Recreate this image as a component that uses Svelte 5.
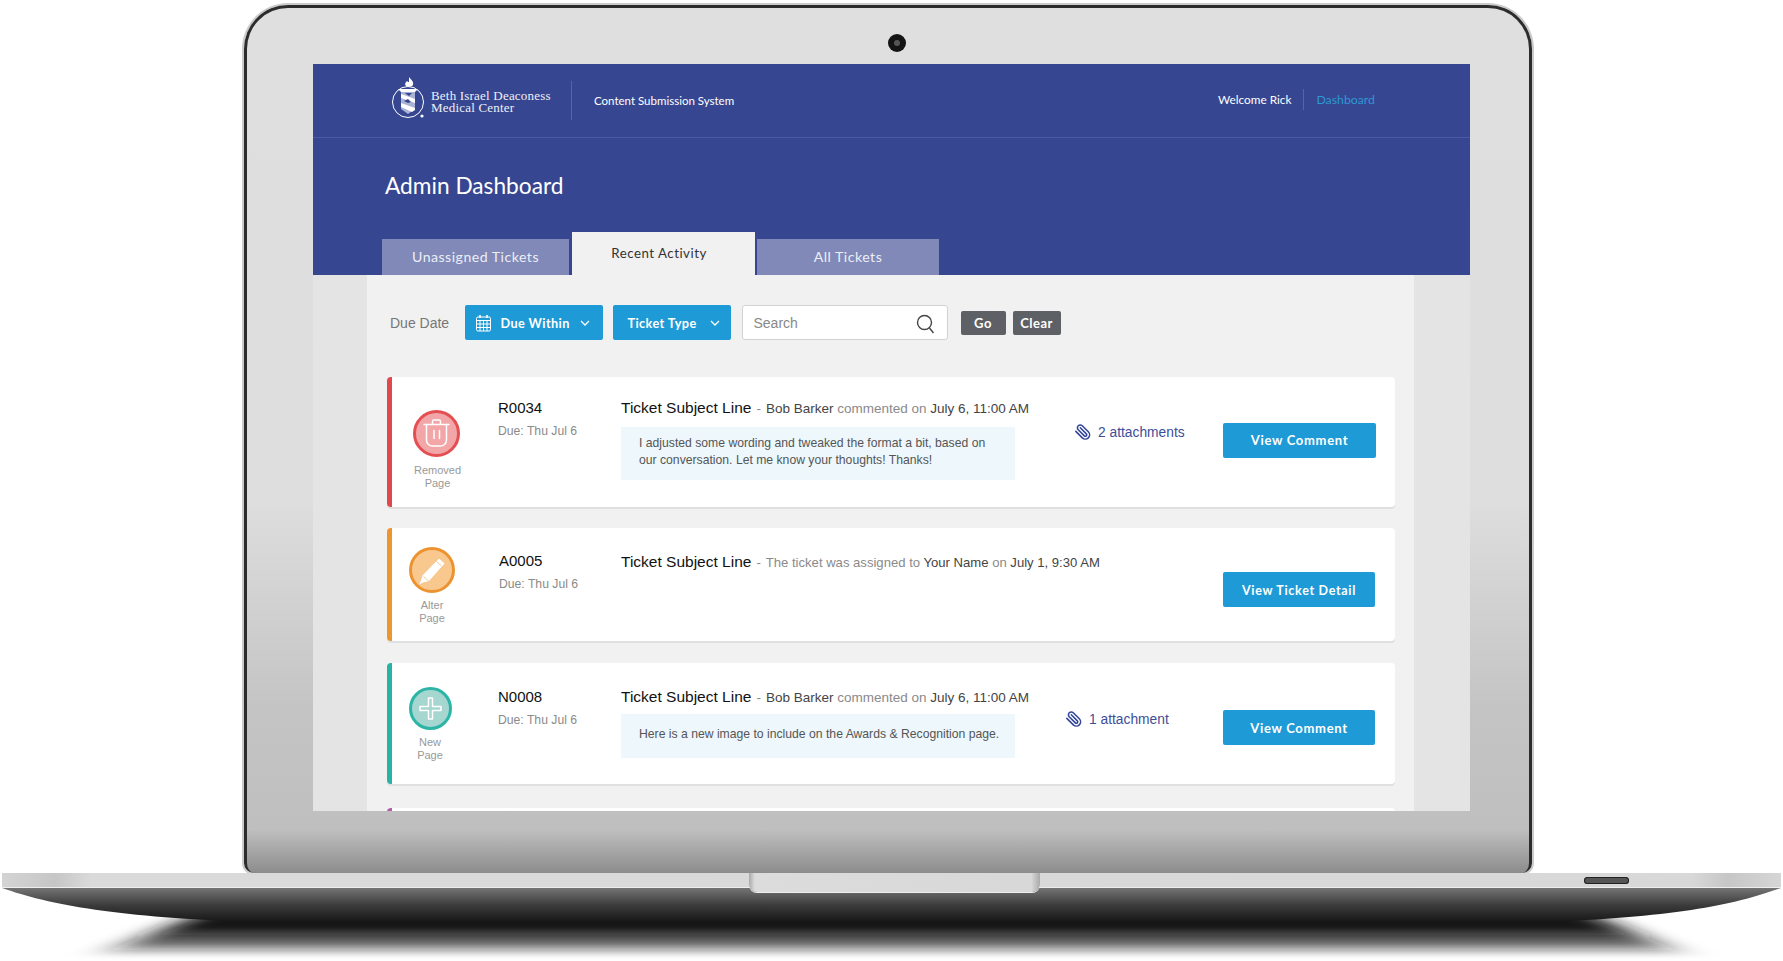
<script lang="ts">
  const tickets = [
    {
      kind: 'removed', label: ['Removed', 'Page'], id: 'R0034',
      parts: [['Bob Barker', 1], [' commented on ', 0], ['July 6, 11:00 AM', 1]],
      note: ['I adjusted some wording and tweaked the format a bit, based on', 'our conversation. Let me know your thoughts! Thanks!'],
      files: '2 attachments', action: 'View Comment'
    },
    {
      kind: 'alter', label: ['Alter', 'Page'], id: 'A0005',
      parts: [['The ticket was assigned to ', 0], ['Your Name', 1], [' on ', 0], ['July 1, 9:30 AM', 1]],
      note: null, files: null, action: 'View Ticket Detail'
    },
    {
      kind: 'new', label: ['New', 'Page'], id: 'N0008',
      parts: [['Bob Barker', 1], [' commented on ', 0], ['July 6, 11:00 AM', 1]],
      note: ['Here is a new image to include on the Awards & Recognition page.'],
      files: '1 attachment', action: 'View Comment'
    }
  ];
</script>

<div class="page">
  <div class="lid">
    <div class="camera-row"><span class="camera"><span class="lens"></span></span></div>
    <div class="screen">
      <header class="top">
        <div class="brand">
          <svg class="logo" width="36" height="44" viewBox="0 0 36 44" fill="none">
            <circle cx="17" cy="26" r="15.5" stroke="#fff" stroke-width="1"/>
            <path d="M18 1c2 3 5 4 4 8-1 2-5 2-7 1-2-2 0-4 1-5 1 1 1 1 2 1 0-2 0-3 0-5Z" fill="#fff"/>
            <path d="M7 13h20l-3 3H10Z" fill="#fff"/>
            <path d="M10 16h14v17l-7 5-7-5Z" fill="#aab2d6"/>
            <path d="M10 18l14 5v4l-14-5ZM10 27l14 5v2l-3 2-11-5Z" fill="#fff"/>
            <path d="M14 17l4 3 3-3ZM13 25l4 2 3-1-3-3Z" fill="#35478f"/>
            <circle cx="31" cy="40" r="1.6" fill="#fff"/>
          </svg>
          <div class="brand-name"><div>Beth Israel Deaconess</div><div>Medical Center</div></div>
          <div class="system">Content Submission System</div>
        </div>
        <nav class="user">
          <span class="welcome">Welcome Rick</span>
          <span class="dash">Dashboard</span>
        </nav>
      </header>

      <div class="hero">
        <h1>Admin Dashboard</h1>
        <div class="tabs">
          <div class="tab tab1">Unassigned Tickets</div>
          <div class="tab active">Recent Activity</div>
          <div class="tab tab3">All Tickets</div>
        </div>
      </div>

      <div class="gutter">
        <main class="panel">
          <div class="filters">
            <span class="due-label">Due Date</span>
            <button class="drop within">
              <svg width="17" height="18" viewBox="0 0 17 18" fill="none" stroke="#fff" stroke-width="1">
                <rect x="1.5" y="3" width="14" height="14" rx="1.5"/>
                <path d="M1.5 6.5h14M1.5 10h14M1.5 13.5h14M5 6.5v10.500M8.500 6.500v10.500M12 6.500v10.500"/>
                <path d="M5 1v3M12 1v3" stroke-width="1.600"/>
              </svg>
              <span>Due Within</span>
              <svg class="chev" width="10" height="6" viewBox="0 0 10 6" fill="none" stroke="#fff" stroke-width="1.300"><path d="m1 1 4 4 4-4"/></svg>
            </button>
            <button class="drop type">
              <span>Ticket Type</span>
              <svg class="chev" width="10" height="6" viewBox="0 0 10 6" fill="none" stroke="#fff" stroke-width="1.300"><path d="m1 1 4 4 4-4"/></svg>
            </button>
            <div class="search">
              <span>Search</span>
              <svg width="19" height="20" viewBox="0 0 19 20" fill="none" stroke="#444" stroke-width="1.400">
                <circle cx="8.500" cy="8.500" r="7"/>
                <path d="m13.500 14 4 5"/>
              </svg>
            </div>
            <button class="small go">Go</button>
            <button class="small clear">Clear</button>
          </div>

          {#each tickets as t}
            <article class="card {t.kind}">
              <div class="status">
                <div class="badge">
                  {#if t.kind === 'removed'}
                    <svg width="47" height="47" viewBox="0 0 47 47" fill="none">
                      <circle cx="23.500" cy="23.500" r="22" fill="#f3a6a7" stroke="#e34f52" stroke-width="3"/>
                      <g stroke="#fff" stroke-width="1.500" stroke-linecap="round">
                        <path d="M11 14.500h25M19.500 14.500v-3a1.500 1.500 0 0 1 1.500-1.500h5a1.500 1.500 0 0 1 1.500 1.500v3"/>
                        <path d="M13.500 14.500v15.500a6 6 0 0 0 6 6h8a6 6 0 0 0 6-6V14.500"/>
                        <path d="M21 20.500v8M26.500 20.500v8"/>
                      </g>
                    </svg>
                  {:else if t.kind === 'alter'}
                    <svg width="46" height="46" viewBox="0 0 46 46" fill="none">
                      <circle cx="23" cy="23" r="21.500" fill="#f9c88f" stroke="#ec932f" stroke-width="3"/>
                      <path d="M30 12l5 4.500-15 17-6 1.500-3 1.500 1.500-3 1.500-5Z" fill="#fff" stroke="#fff" stroke-width="1" stroke-linejoin="round"/>
                      <path d="M27.500 14.500l5 4.500M14.500 29.500l5 4.500" stroke="#f9c88f" stroke-width="1"/>
                    </svg>
                  {:else}
                    <svg width="43" height="43" viewBox="0 0 43 43" fill="none">
                      <circle cx="21.500" cy="21.500" r="20" fill="#a5d6d0" stroke="#2cb5a6" stroke-width="3"/>
                      <path d="M19.500 11h4v8.500h8.500v4h-8.500V32h-4v-8.500H11v-4h8.500Z" fill="none" stroke="#fff" stroke-width="1.500" stroke-linejoin="round"/>
                    </svg>
                  {/if}
                </div>
                <div class="badge-label">{t.label[0]}<br />{t.label[1]}</div>
              </div>

              <div class="ident">
                <div class="code">{t.id}</div>
                <div class="due">Due: Thu Jul 6</div>
              </div>

              <div class="body">
                <div class="line">
                  <span class="subject">Ticket Subject Line</span><span class="dash-sep">-</span>{#each t.parts as p}<span class={p[1] ? 'strong' : 'soft'}>{p[0]}</span>{/each}
                </div>
                {#if t.note}
                  <div class="note">
                    {#each t.note as n}<div>{n}</div>{/each}
                  </div>
                {/if}
              </div>

              <div class="files">
                {#if t.files}
                  <svg width="17" height="18" viewBox="0 0 24 24" fill="none" stroke="#34479a" stroke-width="2.200" stroke-linecap="round" stroke-linejoin="round">
                    <path transform="translate(24 0) scale(-1 1)" d="m21.440 11.050-9.190 9.190a6 6 0 0 1-8.490-8.490l8.570-8.570A4 4 0 1 1 18 8.840l-8.590 8.570a2 2 0 0 1-2.830-2.830l8.490-8.480"/>
                  </svg>
                  <span>{t.files}</span>
                {/if}
              </div>

              <button class="cta">{t.action}</button>
            </article>
          {/each}

          <div class="card more"></div>
        </main>
      </div>
    </div>
  </div>

  <div class="base">
    <div class="deck">
      <span class="notch"></span>
      <span class="port"></span>
    </div>
    <svg class="under" width="1783" height="73" viewBox="0 0 1783 73">
      <defs>
        <linearGradient id="belly" x1="0" y1="0" x2="0" y2="1">
          <stop offset="0" stop-color="#747474"/>
          <stop offset="0.5" stop-color="#3c3c3c"/>
          <stop offset="1" stop-color="#161616"/>
        </linearGradient>
        <linearGradient id="fall" x1="0" y1="0" x2="0" y2="1">
          <stop offset="0" stop-color="#151515"/>
          <stop offset="0.25" stop-color="#151515"/>
          <stop offset="0.65" stop-color="#151515" stop-opacity="0.6"/>
          <stop offset="0.9" stop-color="#151515" stop-opacity="0.12"/>
          <stop offset="1" stop-color="#151515" stop-opacity="0"/>
        </linearGradient>
        <filter id="soft" x="-5%" y="-30%" width="110%" height="160%"><feGaussianBlur stdDeviation="18 1.500"/></filter>
      </defs>
      <path d="M195 28H1595L1695 70H90Z" fill="url(#fall)" filter="url(#soft)"/>
      <path d="M2 0C50 17 120 30 260 34H1540C1670 30 1735 17 1781 0Z" fill="url(#belly)"/>
    </svg>
  </div>
</div>

<style>
  :global(body) {
    margin: 0;
    background: #fff;
    overflow: hidden;
  }

  .page {
    width: 1783px;
    height: 961px;
    overflow: hidden;
    padding-top: 5px;
    box-sizing: border-box;
    font-family: "Liberation Sans", Arial, sans-serif;
  }

  .lid {
    box-sizing: border-box;
    width: 1288px;
    height: 868px;
    margin-left: 244px;
    padding: 0 63px 0 66px;
    border: 3px solid #2c2c2c;
    border-bottom: 0;
    border-radius: 44px 44px 10px 10px;
    background: linear-gradient(180deg, #dfdfdf 0, #dedede 57%, #c4c4c4 81%, #bfbfbf 95%, #8c8c8c 100%);
    box-shadow: 0 0 0 2px #cbcbcb;
  }

  .camera-row {
    height: 56px;
    box-sizing: border-box;
    padding: 26px 0 0 575px;
  }

  .camera {
    display: flex;
    align-items: center;
    justify-content: center;
    width: 18px;
    height: 18px;
    border-radius: 50%;
    background: #141414;
  }

  .lens {
    width: 6px;
    height: 6px;
    border-radius: 50%;
    background: #555;
  }

  .screen {
    width: 1157px;
    height: 747px;
    overflow: hidden;
    background: #364690;
  }

  .top {
    display: flex;
    align-items: center;
    justify-content: space-between;
    height: 73px;
    padding: 0 95px 0 78px;
    border-bottom: 1px solid #4a5ba6;
    font-family: Lato, sans-serif;
    font-size: 11.800px;
    color: #fff;
  }

  .brand {
    display: flex;
    align-items: center;
  }

  .logo {
    margin: -5px 4px 0 0;
  }

  .brand-name {
    width: 141px;
    height: 39px;
    box-sizing: border-box;
    padding-top: 9px;
    margin-right: 22px;
    border-right: 1px solid #5565a8;
    font-family: "Liberation Serif", serif;
    font-size: 13px;
    line-height: 12px;
    letter-spacing: 0.200px;
    color: #eef0f8;
  }

  .system {
    margin-top: -1px;
    font-size: 11.500px;
  }

  .user {
    display: flex;
    align-items: center;
    padding-bottom: 3px;
  }

  .welcome {
    padding: 3px 12px 3px 0;
    border-right: 1px solid #5565a8;
  }

  .dash {
    margin-left: 12px;
    font-size: 12.300px;
    color: #2f97d3;
  }

  .hero {
    display: flex;
    flex-direction: column;
    height: 137px;
  }

  h1 {
    margin: 33px 0 0 72px;
    height: 69px;
    font: 400 22.700px/30px Lato, sans-serif;
    color: #fff;
  }

  .tabs {
    display: flex;
    align-items: flex-end;
    height: 43px;
    margin: -7px 0 0 69px;
    font-family: Lato, sans-serif;
    font-size: 14.100px;
    letter-spacing: 0.500px;
  }

  .tab {
    display: flex;
    align-items: center;
    justify-content: center;
    height: 36px;
    padding-bottom: 2px;
    background: #8089b8;
    color: #eceef6;
    box-sizing: border-box;
  }

  .tab1 { width: 187px; margin-right: 3px; }
  .tab3 { width: 182px; margin-left: 2px; }

  .tab.active {
    width: 183px;
    height: 43px;
    padding: 0 9px 2px 0;
    background: #f1f1f1;
    font-size: 13.300px;
    color: #333;
  }

  .gutter {
    height: 536px;
    padding: 0 56px 0 54px;
    background: #e4e4e4;
  }

  .panel {
    height: 536px;
    box-sizing: border-box;
    overflow: hidden;
    padding: 30px 19px 0 20px;
    background: #f1f1f1;
  }

  .filters {
    display: flex;
    align-items: center;
    height: 35px;
    margin-bottom: 37px;
  }

  .due-label {
    width: 75px;
    padding-left: 3px;
    font-size: 14px;
    color: #777;
    box-sizing: border-box;
    margin-right: 2.500px;
  }

  button {
    border: 0;
    padding: 0;
    font-family: Lato, sans-serif;
    font-weight: 700;
    color: #fff;
  }

  .drop {
    display: flex;
    align-items: center;
    height: 35px;
    border-radius: 2px;
    background: #1e9ad6;
    font-size: 12.700px;
    letter-spacing: 0.400px;
  }

  .within {
    width: 138px;
    padding-left: 10px;
    margin-right: 10px;
  }

  .within span { margin-left: 9px; }
  .within .chev { margin-left: 10px; }

  .type {
    width: 118px;
    padding-left: 15px;
    margin-right: 11px;
  }

  .type .chev { margin-left: 13px; }

  .search {
    display: flex;
    align-items: center;
    justify-content: space-between;
    box-sizing: border-box;
    width: 206px;
    height: 35px;
    padding: 0 12px 0 11px;
    margin-right: 13px;
    border: 1.500px solid #d2d2d2;
    border-radius: 3px;
    background: #fff;
    font-size: 14px;
    color: #888;
  }

  .search svg { margin-top: 2px; }

  .small {
    height: 24px;
    border-radius: 2px;
    background: #5d6165;
    font-size: 13px;
    letter-spacing: 0.500px;
  }

  .go { width: 45px; margin-right: 7px; }
  .clear { width: 48px; }

  .card {
    display: grid;
    grid-template-columns: 88px 141px 439px 163px 153px;
    box-sizing: border-box;
    margin-bottom: 21px;
    border-left: 5px solid;
    border-radius: 4px;
    background: #fff;
    box-shadow: 0 2px 0 #e0e0e0;
  }

  .removed { height: 130px; border-color: #e0484d; }
  .alter { height: 113px; border-color: #ed962f; margin-bottom: 22px; }
  .new { height: 121px; border-color: #27b4a4; margin-bottom: 24px; }
  .more { height: 40px; border-color: #b45bb0; }

  .status {
    display: flex;
    flex-direction: column;
    align-items: center;
  }

  .removed .status { padding: 33px 0 0 0; }
  .alter .status { padding: 19px 8px 0 0; }
  .new .status { padding: 24px 12px 0 0; }

  .badge { display: flex; }
  .removed .badge-label { margin: 7px 0 0 3px; }

  .badge-label {
    margin-top: 6px;
    font-size: 11px;
    line-height: 13px;
    text-align: center;
    color: #999;
  }

  .ident { padding-left: 18px; }
  .removed .ident { padding-top: 21px; }
  .alter .ident { padding-top: 23px; padding-left: 19px; }
  .new .ident { padding-top: 24px; }

  .code {
    font-size: 15px;
    line-height: 20px;
    color: #111;
  }

  .due {
    margin-top: 5px;
    font-size: 12.200px;
    line-height: 16px;
    color: #8a8a8a;
  }

  .removed .body { padding-top: 21px; }
  .alter .body { padding-top: 24px; }
  .new .body { padding-top: 24px; }

  .line {
    font-size: 13.500px;
    line-height: 20px;
    white-space: nowrap;
  }

  .alter .line { font-size: 13.100px; }

  .subject {
    font-size: 15.500px;
    color: #111;
  }

  .dash-sep {
    margin: 0 5px;
  }

  .dash-sep, .soft { color: #8a8a8a; }
  .strong { color: #444; }

  .note {
    box-sizing: border-box;
    width: 394px;
    margin-top: 8px;
    padding: 8px 18px;
    background: #edf7fc;
    font-size: 12.200px;
    line-height: 17px;
    color: #555;
    white-space: nowrap;
  }

  .new .note {
    margin-top: 6px;
    height: 44px;
    padding: 12px 18px;
  }

  .removed .note { height: 53px; }

  .files {
    display: flex;
    align-items: flex-start;
    gap: 7px;
    font-size: 13.800px;
    line-height: 20px;
    color: #3d4d97;
  }

  .removed .files { padding: 46px 0 0 14px; }
  .new .files { padding: 47px 0 0 5px; }

  .cta {
    align-self: start;
    height: 35px;
    border-radius: 2px;
    background: #1e9ad6;
    font-size: 13px;
    letter-spacing: 0.700px;
  }

  .removed .cta { margin-top: 46px; padding-bottom: 1px; }
  .alter .cta { margin-top: 44px; width: 152px; padding-top: 2px; font-size: 12.500px; }
  .new .cta { margin-top: 47px; width: 152px; padding-top: 1px; }

  .base {
    width: 1783px;
  }

  .deck {
    position: relative;
    height: 15px;
    margin: 0 2px;
    background: linear-gradient(90deg, #d4d4d4 0, #c6c6c6 3%, #dadada 5%, #d8d8d8 95%, #c6c6c6 97%, #d6d6d6 100%);
    border-bottom: 1px solid #eee;
    box-sizing: border-box;
  }

  .notch {
    position: absolute;
    left: 747px;
    top: 0;
    width: 291px;
    height: 19px;
    border-radius: 0 0 8px 8px;
    background: linear-gradient(90deg, #a9a9a9 0, #dcdcdc 2%, #d8d8d8 97%, #a9a9a9 100%);
    box-shadow: 0 1px 0 #eee;
  }

  .port {
    position: absolute;
    left: 1582px;
    top: 4px;
    width: 45px;
    height: 7px;
    border-radius: 4px;
    background: #555;
    box-shadow: inset 0 0 0 1px #222;
  }

  .under {
    display: block;
  }
</style>
